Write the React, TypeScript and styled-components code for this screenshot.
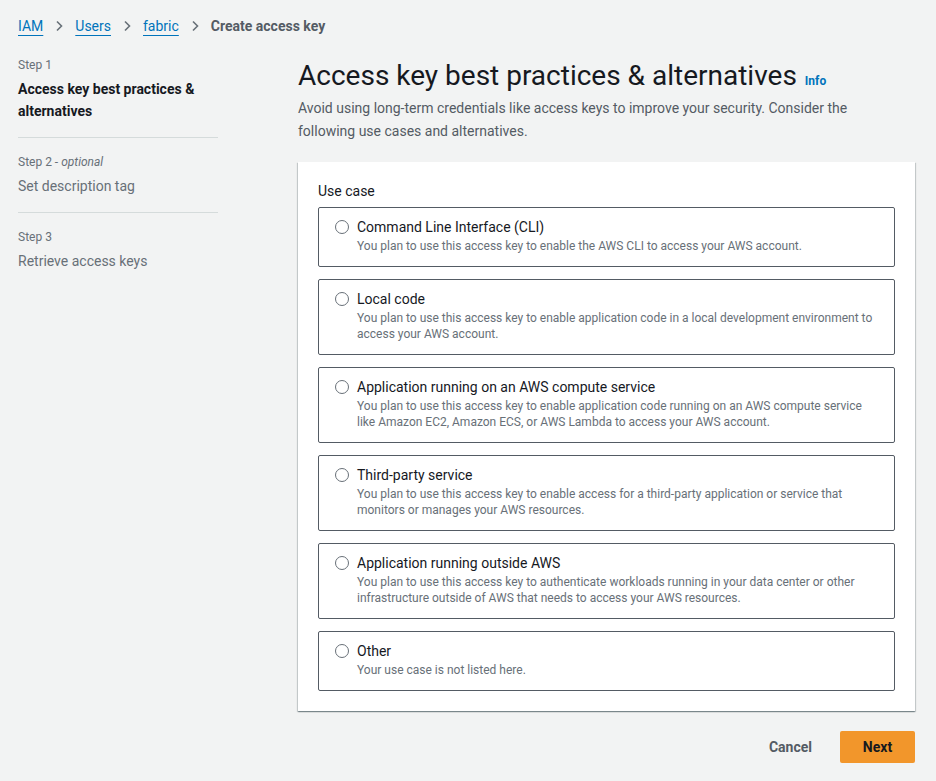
import styled, { createGlobalStyle } from 'styled-components'

const GlobalStyle = createGlobalStyle`
    body {
        margin: 0;
        background-color: #f2f3f3;
        font-family: Roboto, "Liberation Sans", sans-serif;
        color: #16191f;
    }
`

const Page = styled.div`
    width: 936px;
    min-height: 781px;
    padding: 15px 21px 0 18px;
    box-sizing: border-box;
`

const Breadcrumbs = styled.nav`
    display: flex;
    align-items: center;
    gap: 10px;
    font-size: 14px;
    line-height: 22px;
    height: 22px;
`

const Crumb = styled.a`
    color: #0073bb;
    text-decoration: underline;
    text-underline-offset: 4px;
    text-decoration-thickness: 1px;
`

const Current = styled.span`
    color: #545b64;
    font-weight: 700;
`

const Chevron = () => (
    <svg width="12" height="12" viewBox="0 0 12 12">
        <path d="M4 1.5 L8.5 6 L4 10.5" fill="none" stroke="#687078" strokeWidth="1.6" />
    </svg>
)

const Layout = styled.div`
    display: flex;
    gap: 80px;
    margin-top: 19px;
`

const Nav = styled.ol`
    list-style: none;
    margin: 0;
    padding: 0;
    width: 200px;
    flex-shrink: 0;
`

const NavItem = styled.li`
    padding: 15px 0 15px;
    border-bottom: 1px solid #d5dbdb;

    &:first-child {
        padding-top: 0;
    }

    &:last-child {
        border-bottom: none;
    }
`

const StepLabel = styled.div`
    font-size: 12px;
    line-height: 18px;
    color: #687078;

    em {
        font-style: italic;
    }
`

const StepTitle = styled.div<{ $active?: boolean }>`
    font-size: 14px;
    line-height: 22px;
    margin-top: 4px;
    font-weight: ${({ $active }) => ($active ? 700 : 400)};
    color: ${({ $active }) => ($active ? '#16191f' : '#687078')};
`

const Main = styled.main`
    flex: 1;
`

const Heading = styled.h1`
    margin: 4px 0 0;
    font-size: 28px;
    line-height: 32px;
    font-weight: 400;
    color: #16191f;
`

const InfoLink = styled.a`
    margin-left: 8px;
    font-size: 12px;
    line-height: 1;
    font-weight: 700;
    color: #0073bb;
`

const Description = styled.p`
    margin: 5px 0 0;
    max-width: 580px;
    font-size: 14px;
    line-height: 23px;
    color: #545b64;
`

const Card = styled.section`
    margin-top: 19px;
    background: #ffffff;
    box-shadow: 0 1px 1px 0 rgba(0, 28, 36, 0.3), 1px 1px 1px 0 rgba(0, 28, 36, 0.15), -1px 1px 1px 0 rgba(0, 28, 36, 0.15);
    padding: 20px;
`

const FieldLabel = styled.div`
    font-size: 14px;
    line-height: 18px;
    color: #16191f;
    margin-bottom: 7px;
`

const Options = styled.div`
    display: flex;
    flex-direction: column;
    gap: 12px;
`

const Option = styled.label`
    display: flex;
    gap: 8px;
    border: 1px solid #545b64;
    border-radius: 2px;
    padding: 9px 16px 12px;
    cursor: pointer;
`

const Radio = styled.span`
    width: 12px;
    height: 12px;
    border: 1px solid #687078;
    border-radius: 50%;
    margin-top: 3px;
    flex-shrink: 0;
`

const OptionText = styled.div`
    display: flex;
    flex-direction: column;
`

const OptionTitle = styled.span`
    font-size: 14px;
    line-height: 20px;
    color: #16191f;
`

const OptionDesc = styled.span`
    margin-top: 1px;
    font-size: 12px;
    line-height: 16px;
    color: #687078;
`

const Actions = styled.div`
    display: flex;
    justify-content: flex-end;
    align-items: center;
    gap: 28px;
    margin-top: 20px;
`

const LinkButton = styled.button`
    background: none;
    border: none;
    font-family: inherit;
    font-size: 14px;
    font-weight: 700;
    color: #545b64;
    padding: 0;
`

const PrimaryButton = styled.button`
    background: #f2962b;
    border: none;
    border-radius: 2px;
    font-family: inherit;
    font-size: 14px;
    font-weight: 700;
    color: #16191f;
    width: 75px;
    height: 32px;
`

const useCases = [
    {
        title: 'Command Line Interface (CLI)',
        desc: 'You plan to use this access key to enable the AWS CLI to access your AWS account.',
    },
    {
        title: 'Local code',
        desc: 'You plan to use this access key to enable application code in a local development environment to access your AWS account.',
    },
    {
        title: 'Application running on an AWS compute service',
        desc: 'You plan to use this access key to enable application code running on an AWS compute service like Amazon EC2, Amazon ECS, or AWS Lambda to access your AWS account.',
    },
    {
        title: 'Third-party service',
        desc: 'You plan to use this access key to enable access for a third-party application or service that monitors or manages your AWS resources.',
    },
    {
        title: 'Application running outside AWS',
        desc: 'You plan to use this access key to authenticate workloads running in your data center or other infrastructure outside of AWS that needs to access your AWS resources.',
    },
    {
        title: 'Other',
        desc: 'Your use case is not listed here.',
    },
]

export default function App() {
    return (
        <>
            <GlobalStyle />
            <Page>
                <Breadcrumbs>
                    <Crumb>IAM</Crumb>
                    <Chevron />
                    <Crumb>Users</Crumb>
                    <Chevron />
                    <Crumb>fabric</Crumb>
                    <Chevron />
                    <Current>Create access key</Current>
                </Breadcrumbs>

                <Layout>
                    <Nav>
                        <NavItem>
                            <StepLabel>Step 1</StepLabel>
                            <StepTitle $active>Access key best practices &amp; alternatives</StepTitle>
                        </NavItem>
                        <NavItem>
                            <StepLabel>Step 2 - <em>optional</em></StepLabel>
                            <StepTitle>Set description tag</StepTitle>
                        </NavItem>
                        <NavItem>
                            <StepLabel>Step 3</StepLabel>
                            <StepTitle>Retrieve access keys</StepTitle>
                        </NavItem>
                    </Nav>

                    <Main>
                        <Heading>
                            Access key best practices &amp; alternatives
                            <InfoLink>Info</InfoLink>
                        </Heading>
                        <Description>
                            Avoid using long-term credentials like access keys to improve your security. Consider the
                            following use cases and alternatives.
                        </Description>

                        <Card>
                            <FieldLabel>Use case</FieldLabel>
                            <Options>
                                {useCases.map((u) => (
                                    <Option key={u.title}>
                                        <Radio />
                                        <OptionText>
                                            <OptionTitle>{u.title}</OptionTitle>
                                            <OptionDesc>{u.desc}</OptionDesc>
                                        </OptionText>
                                    </Option>
                                ))}
                            </Options>
                        </Card>

                        <Actions>
                            <LinkButton>Cancel</LinkButton>
                            <PrimaryButton>Next</PrimaryButton>
                        </Actions>
                    </Main>
                </Layout>
            </Page>
        </>
    )
}
